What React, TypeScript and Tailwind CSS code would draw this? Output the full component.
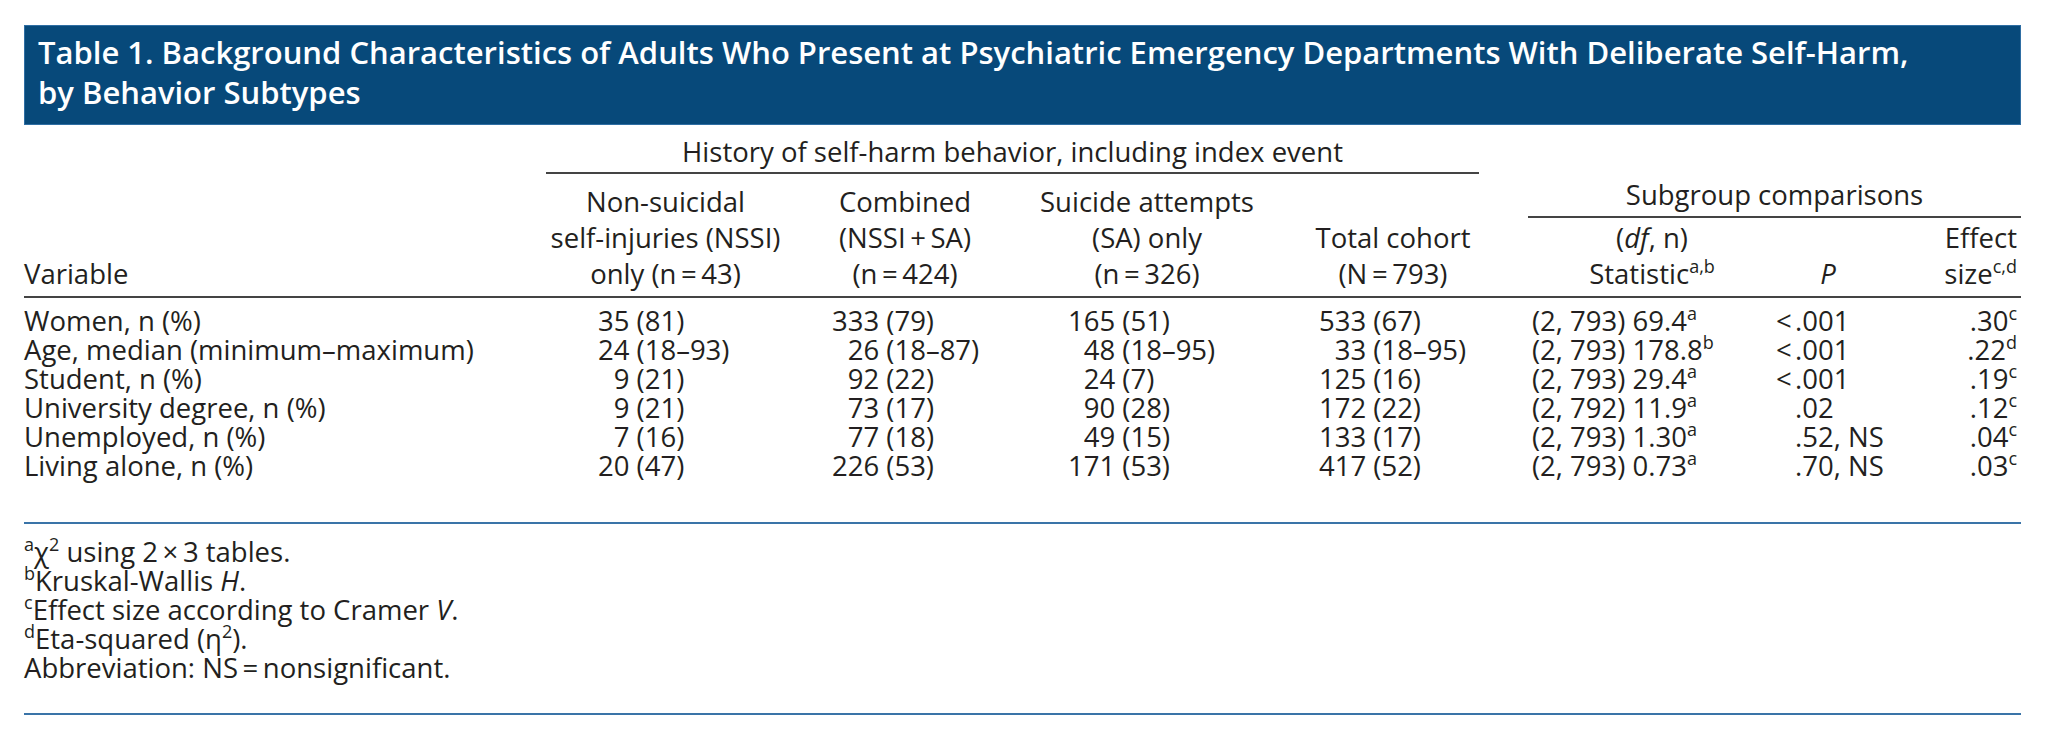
import React from "react";

type Row = {
  label: string;
  nssi: [number, string];
  comb: [number, string];
  sa: [number, string];
  total: [number, string];
  stat: string;
  statSup: string;
  pPre: string;
  p: string;
  eff: string;
  effSup: string;
};

const rows: Row[] = [
  { label: "Women, n (%)", nssi: [0, "35 (81)"], comb: [0, "333 (79)"], sa: [0, "165 (51)"], total: [0, "533 (67)"], stat: "(2, 793) 69.4", statSup: "a", pPre: "<", p: ".001", eff: ".30", effSup: "c" },
  { label: "Age, median (minimum–maximum)", nssi: [0, "24 (18–93)"], comb: [1, "26 (18–87)"], sa: [1, "48 (18–95)"], total: [1, "33 (18–95)"], stat: "(2, 793) 178.8", statSup: "b", pPre: "<", p: ".001", eff: ".22", effSup: "d" },
  { label: "Student, n (%)", nssi: [1, "9 (21)"], comb: [1, "92 (22)"], sa: [1, "24 (7)"], total: [0, "125 (16)"], stat: "(2, 793) 29.4", statSup: "a", pPre: "<", p: ".001", eff: ".19", effSup: "c" },
  { label: "University degree, n (%)", nssi: [1, "9 (21)"], comb: [1, "73 (17)"], sa: [1, "90 (28)"], total: [0, "172 (22)"], stat: "(2, 792) 11.9", statSup: "a", pPre: "", p: ".02", eff: ".12", effSup: "c" },
  { label: "Unemployed, n (%)", nssi: [1, "7 (16)"], comb: [1, "77 (18)"], sa: [1, "49 (15)"], total: [0, "133 (17)"], stat: "(2, 793) 1.30", statSup: "a", pPre: "", p: ".52, NS", eff: ".04", effSup: "c" },
  { label: "Living alone, n (%)", nssi: [0, "20 (47)"], comb: [0, "226 (53)"], sa: [0, "171 (53)"], total: [0, "417 (52)"], stat: "(2, 793) 0.73", statSup: "a", pPre: "", p: ".70, NS", eff: ".03", effSup: "c" },
];

const Sup = ({ children }: { children: React.ReactNode }) => (
  <sup className="text-[18px] top-[-0.6em]">{children}</sup>
);

// hidden digits keep the numbers lined up on their right edge
const Num = ({ v }: { v: [number, string] }) => (
  <>
    {v[0] > 0 && <span className="invisible">{"0".repeat(v[0])}</span>}
    {v[1]}
  </>
);

const rowGrid =
  "grid grid-cols-[522px_239px_240px_244px_210px_49px_248px_104px_141px] whitespace-nowrap";

export default function App() {
  return (
    <div className="min-h-screen bg-white pl-[24px] pt-[25px] font-['Open_Sans',sans-serif] text-[27.5px] text-[#231f20]">
      <div className="w-[1997px]">
        <div className="bg-[#07497a] border border-[#2f6ea3] pl-[13px] pt-[6px] pb-[12px] text-[31px] font-semibold leading-[40px] text-white">
          Table 1. Background Characteristics of Adults Who Present at Psychiatric Emergency Departments With Deliberate Self-Harm,
          <br />
          by Behavior Subtypes
        </div>

        {/* column heads */}
        <div className="flex items-end border-b-2 border-[#444] mt-[9px]">
          <div className="w-[522px] pb-[4px] leading-[36px]">Variable</div>
          <div className="w-[933px] flex flex-col">
            <div className="text-center leading-[36px] pb-[2px] border-b-2 border-[#444]">
              History of self-harm behavior, including index event
            </div>
            <div className="flex items-end pt-[10px] pb-[4px] leading-[36px] text-center">
              <div className="w-[239px]">
                Non-suicidal
                <br />
                self-injuries (NSSI)
                <br />
                only (n{"\u2009=\u2009"}43)
              </div>
              <div className="w-[240px]">
                Combined
                <br />
                (NSSI{"\u2009+\u2009"}SA)
                <br />
                (n{"\u2009=\u2009"}424)
              </div>
              <div className="w-[244px]">
                Suicide attempts
                <br />
                (SA) only
                <br />
                (n{"\u2009=\u2009"}326)
              </div>
              <div className="w-[210px] pl-[38px]">
                Total cohort
                <br />
                (N{"\u2009=\u2009"}793)
              </div>
            </div>
          </div>
          <div className="w-[49px]" />
          <div className="w-[493px] flex flex-col">
            <div className="text-center leading-[36px] pb-[3px] border-b-2 border-[#444]">
              Subgroup comparisons
            </div>
            <div className="flex items-end pt-[2px] pb-[4px] leading-[36px]">
              <div className="w-[248px] text-center">
                (<i>df</i>, n)
                <br />
                Statistic<Sup>a,b</Sup>
              </div>
              <div className="w-[104px] text-center">
                <i>P</i>
              </div>
              <div className="w-[141px] text-right pr-[4px]">
                Effect
                <br />
                size<Sup>c,d</Sup>
              </div>
            </div>
          </div>
        </div>

        {/* body */}
        <div className="pt-[8px] pb-[42px] border-b-2 border-[#3a74a8] leading-[29px]">
          {rows.map((r) => (
            <div key={r.label} className={rowGrid}>
              <div>{r.label}</div>
              <div className="pl-[52px]">
                <Num v={r.nssi} />
              </div>
              <div className="pl-[47px]">
                <Num v={r.comb} />
              </div>
              <div className="pl-[43px]">
                <Num v={r.sa} />
              </div>
              <div className="pl-[50px]">
                <Num v={r.total} />
              </div>
              <div />
              <div className="pl-[4px]">
                {r.stat}
                <Sup>{r.statSup}</Sup>
              </div>
              <div className="flex">
                <span className="w-[19px] shrink-0">{r.pPre}</span>
                <span>{r.p}</span>
              </div>
              <div className="text-right pr-[4px]">
                {r.eff}
                <Sup>{r.effSup}</Sup>
              </div>
            </div>
          ))}
        </div>

        {/* notes */}
        <div className="pt-[13px] pb-[31px] border-b-2 border-[#3a74a8] leading-[29px]">
          <div>
            <Sup>a</Sup>χ<Sup>2</Sup> using 2{"\u2009×\u2009"}3 tables.
          </div>
          <div>
            <Sup>b</Sup>Kruskal-Wallis <i>H</i>.
          </div>
          <div>
            <Sup>c</Sup>Effect size according to Cramer <i>V</i>.
          </div>
          <div>
            <Sup>d</Sup>Eta-squared (η<Sup>2</Sup>).
          </div>
          <div>Abbreviation: NS{"\u2009=\u2009"}nonsignificant.</div>
        </div>
      </div>
    </div>
  );
}
